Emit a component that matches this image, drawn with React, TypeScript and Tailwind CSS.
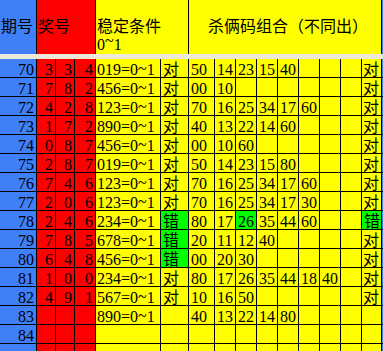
import React from "react";

const rows: string[][] = [
  ["70", "3", "3", "4", "019=0~1", "对", "50", "14", "23", "15", "40", "", "", "", "对"],
  ["71", "7", "8", "2", "456=0~1", "对", "00", "10", "", "", "", "", "", "", "对"],
  ["72", "4", "2", "8", "123=0~1", "对", "70", "16", "25", "34", "17", "60", "", "", "对"],
  ["73", "1", "7", "2", "890=0~1", "对", "40", "13", "22", "14", "60", "", "", "", "对"],
  ["74", "0", "8", "7", "456=0~1", "对", "00", "10", "60", "", "", "", "", "", "对"],
  ["75", "2", "8", "7", "019=0~1", "对", "50", "14", "23", "15", "80", "", "", "", "对"],
  ["76", "7", "4", "6", "123=0~1", "对", "70", "16", "25", "34", "17", "60", "", "", "对"],
  ["77", "2", "0", "6", "123=0~1", "对", "70", "16", "25", "34", "17", "30", "", "", "对"],
  ["78", "2", "4", "6", "234=0~1", "错", "80", "17", "26", "35", "44", "60", "", "", "错"],
  ["79", "7", "8", "5", "678=0~1", "错", "20", "11", "12", "40", "", "", "", "", "对"],
  ["80", "6", "4", "8", "456=0~1", "错", "00", "20", "30", "", "", "", "", "", "对"],
  ["81", "1", "0", "0", "234=0~1", "对", "80", "17", "26", "35", "44", "18", "40", "", "对"],
  ["82", "4", "9", "1", "567=0~1", "对", "10", "16", "50", "", "", "", "", "", "对"],
  ["83", "", "", "", "890=0~1", "", "40", "13", "22", "14", "80", "", "", "", ""],
  ["84", "", "", "", "", "", "", "", "", "", "", "", "", "", ""],
  ["", "", "", "", "", "", "", "", "", "", "", "", "", "", ""],
];

// cells that are filled green
const green = new Set(["78-5", "78-8", "78-14", "79-5", "80-5"]);

const cols =
  "grid grid-cols-[36px_18px_18px_20px_64px_27px_25px_repeat(7,20px)_19px_1px]";

function cellClass(row: string, c: number) {
  if (c === 0) return "bg-[#3f7ff7] justify-end pr-[2px]";
  if (c <= 3) return "bg-[#ff0000] justify-end pr-[2px]";
  if (green.has(`${row}-${c}`)) return "bg-[#00ff00] pl-[2px]";
  if (c === 4) return "bg-[#ffff00] pl-[1px]";
  if (c === 14) return "bg-[#ffff00] pl-[1px]";
  return "bg-[#ffff00] pl-[2px]";
}

// the sheet font draws "~" high up, like a superscript
function Cond({ text }: { text: string }) {
  const i = text.indexOf("~");
  if (i < 0) return <>{text}</>;
  return (
    <>
      {text.slice(0, i)}
      <span className="inline-block leading-[8px] relative -top-[4px]">~</span>
      {text.slice(i + 1)}
    </>
  );
}

export default function App() {
  return (
    <div
      className="w-[383px] h-[351px] overflow-hidden bg-white text-black text-[16px]"
      style={{ fontFamily: '"Liberation Serif", "Noto Sans CJK SC", serif' }}
    >
      {/* header */}
      <div className={`${cols} gap-x-px bg-black h-[54px]`}>
        <div className="bg-[#3f7ff7] flex items-center pl-[1px]">期号</div>
        <div className="col-span-3 bg-[#ff0000] flex items-center pl-[1px]">奖号</div>
        <div className="col-span-2 bg-[#ffff00] pl-[1px] pt-[18px] leading-[18px]">
          稳定条件
          <br />
          <Cond text="0~1" />
        </div>
        <div className="col-span-9 bg-[#ffff00] flex items-center justify-center pl-[6px]">
          杀俩码组合（不同出）
        </div>
        <div className="bg-[#3f7ff7]"></div>
      </div>

      {/* frozen pane split */}
      <div className="h-[5px] bg-[#ece9d8]"></div>

      {/* body */}
      <div className={`${cols} gap-px bg-black`}>
        {rows.map((r, i) => (
          <React.Fragment key={i}>
            {r.map((v, c) => (
              <div
                key={c}
                className={`h-[18px] flex items-end leading-[14px] whitespace-nowrap ${cellClass(r[0], c)}`}
              >
                {c === 4 ? <Cond text={v} /> : v}
              </div>
            ))}
            <div className="h-[18px] bg-[#3f7ff7]"></div>
          </React.Fragment>
        ))}
      </div>
    </div>
  );
}
